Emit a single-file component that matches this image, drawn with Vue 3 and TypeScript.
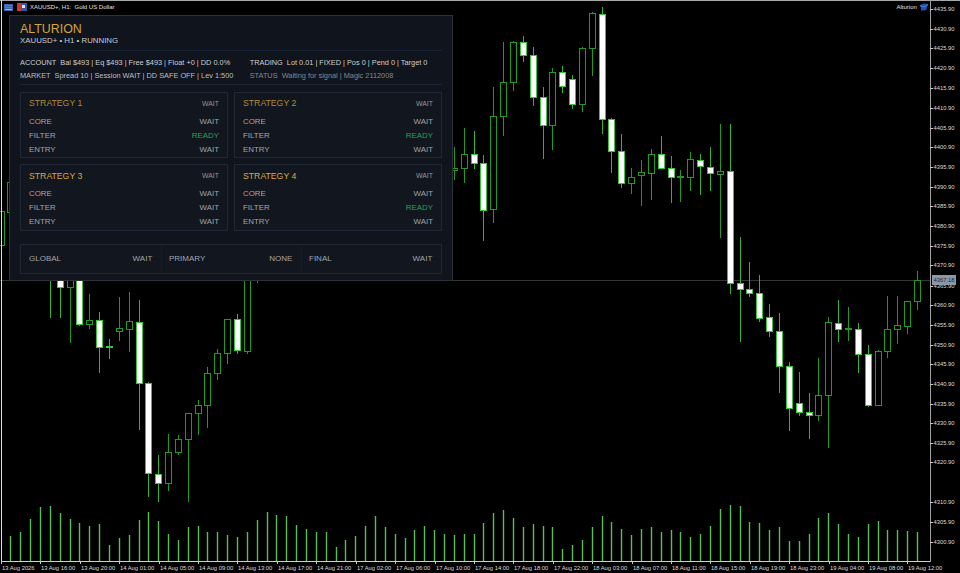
<template>
  <div class="screen">
    <svg class="chart" width="960" height="573" viewBox="0 0 960 573">
      <rect width="960" height="573" fill="#000" />
      <line x1="0" y1="280.5" x2="931" y2="280.5" stroke="#34373a" />

      <line v-for="v in volumes" :key="'v' + v.i" :x1="barX(v.i) + 0.5" :x2="barX(v.i) + 0.5" :y1="v.y" y2="561" stroke="#57bd57" stroke-width="1.4" />
      <g shape-rendering="crispEdges">
        <g v-for="c in candles" :key="'c' + c.i">
          <line :x1="barX(c.i) + 0.5" :x2="barX(c.i) + 0.5" :y1="c.wt" :y2="c.wb" :stroke="c.white ? '#2fb52f' : '#209a20'" />
          <rect :x="barX(c.i) - 2.5" :y="c.t + 0.5" width="6" :height="Math.max(c.b - c.t, 1)" :fill="c.white ? '#fff' : '#000'" :stroke="c.white ? '#35c935' : '#209a20'" />
        </g>
        <line x1="0" y1="0.5" x2="960" y2="0.5" stroke="#a8a8a8" />
        <line x1="1.5" y1="0" x2="1.5" y2="562" stroke="#e0e0e0" />
        <line x1="1" y1="561.5" x2="931" y2="561.5" stroke="#d0d0d0" />
        <line x1="930.5" y1="0" x2="930.5" y2="562" stroke="#a0a0a0" />
        <line v-for="t in timeLabels" :key="'t' + t.x" :x1="t.x + 0.5" :x2="t.x + 0.5" y1="561" y2="564" stroke="#c8c8c8" />
        <line v-for="p in priceLabels" :key="'p' + p.y" x1="930" x2="933" :y1="p.y + 0.5" :y2="p.y + 0.5" stroke="#c8c8c8" />
      </g>

      <text v-for="p in priceLabels" :key="'pl' + p.y" x="933.5" :y="p.y + 2.2" class="axis-text">{{ p.text }}</text>
      <text v-for="t in timeLabels" :key="'tl' + t.x" :x="t.x + 1" y="569.5" class="axis-text">{{ t.text }}</text>

      <rect x="932" y="275" width="24" height="10" fill="#8a98a8" />
      <text x="933.5" y="282.2" class="axis-text price-now">4367.18</text>

      <!-- toolbar icons top left -->
      <g shape-rendering="crispEdges">
        <rect x="4" y="4" width="9" height="7" fill="#3763a8" />
        <rect x="5" y="5" width="7" height="1" fill="#c95a50" />
        <rect x="5" y="7" width="7" height="1" fill="#c95a50" />
        <rect x="5" y="9" width="7" height="1" fill="#9fb8d8" />
        <rect x="17" y="3" width="10" height="8" fill="#2f58b0" />
        <rect x="17" y="3" width="4" height="8" fill="#c83a3a" />
        <rect x="22" y="5" width="3" height="3" fill="#e8e8f0" />
      </g>
      <text x="30" y="9" class="top-text">{{ symbolTitle }}</text>
      <text x="896.5" y="9.2" class="top-text">Alturion</text>
      <!-- hat icon -->
      <path d="M919.5 5.5 L924 3.6 L928.5 4.2 L927 6.5 L926.5 10 L921 10.8 L921 7.2 Z" fill="#1b55b5" />
      <path d="M920 5.6 L924 7 L928 4.6" fill="none" stroke="#6fa0e8" stroke-width="0.6" />
    </svg>

    <div class="panel">
      <div class="brand">ALTURION</div>
      <div class="sub">XAUUSD+ • H1 • RUNNING</div>
      <div class="info">
        <div v-for="l in infoLines" :key="l.text" class="line" :class="l.kind">{{ l.text }}</div>
      </div>
      <div class="cards">
        <div v-for="s in strategies" :key="s.name" class="card">
          <div class="card-head">
            <span class="card-title" :class="{ dim: s.dim }">{{ s.name }}</span>
            <span class="card-state">WAIT</span>
          </div>
          <div v-for="r in s.rows" :key="r.label" class="row">
            <span>{{ r.label }}</span>
            <span :class="{ ready: r.value === 'READY' }">{{ r.value }}</span>
          </div>
        </div>
      </div>
      <div class="summary">
        <div v-for="g in summary" :key="g.label" class="cell">
          <span>{{ g.label }}</span>
          <span>{{ g.value }}</span>
        </div>
      </div>
    </div>
  </div>
</template>

<script setup lang="ts">
type Row = [number, number, number, number, number, number]

const symbolTitle = 'XAUUSD+, H1:  Gold US Dollar'

const infoLines = [
  { text: 'ACCOUNT  Bal $493 | Eq $493 | Free $493 | Float +0 | DD 0.0%', kind: '' },
  { text: 'TRADING  Lot 0.01 | FIXED | Pos 0 | Pend 0 | Target 0', kind: '' },
  { text: 'MARKET  Spread 10 | Session WAIT | DD SAFE OFF | Lev 1:500', kind: 'market' },
  { text: 'STATUS  Waiting for signal | Magic 2112008', kind: 'status' },
]

// i, wick top, body top, body bottom, wick bottom, white
const rawCandles: Row[] = [
  [-1, 205, 211, 245, 250, 0], [0, 175, 182, 212, 215, 0],
  [4, 200, 210, 270, 318, 1], [5, 250, 260, 287, 318, 1], [6, 250, 260, 287, 343, 0], [7, 250, 260, 324, 326, 1],
  [8, 294, 320, 324, 329, 0], [9, 312, 320, 347, 373, 1], [10, 339, 346, 347, 359, 1], [11, 297, 328, 331, 341, 0],
  [12, 292, 321, 329, 352, 0], [13, 300, 322, 383, 430, 1], [14, 382, 383, 473, 497, 1], [15, 455, 474, 483, 502, 1],
  [16, 434, 452, 483, 491, 0], [17, 435, 439, 452, 455, 0], [18, 413, 413, 439, 502, 0], [19, 400, 405, 413, 435, 0],
  [20, 367, 373, 405, 428, 0], [21, 349, 353, 373, 380, 0], [22, 319, 319, 353, 364, 0], [23, 314, 319, 350, 354, 1],
  [24, 250, 260, 351, 354, 0], [25, 260, 265, 270, 283, 0],
  [45, 147, 168, 170, 180, 0], [46, 128, 154, 168, 183, 0], [47, 131, 154, 163, 169, 1], [48, 155, 163, 210, 241, 1],
  [49, 87, 116, 209, 223, 0], [50, 42, 82, 116, 136, 0], [51, 41, 42, 82, 91, 0], [52, 36, 42, 55, 62, 1],
  [53, 47, 55, 97, 106, 1], [54, 87, 97, 125, 159, 1], [55, 68, 72, 125, 150, 0], [56, 66, 72, 86, 93, 1],
  [57, 75, 79, 104, 109, 1], [58, 47, 48, 104, 112, 0], [59, 12, 13, 48, 76, 0], [60, 7, 14, 119, 134, 1],
  [61, 118, 119, 151, 173, 1], [62, 134, 151, 183, 188, 1], [63, 168, 177, 183, 194, 0], [64, 160, 172, 175, 206, 0],
  [65, 149, 154, 173, 200, 0], [66, 136, 154, 168, 169, 1], [67, 156, 168, 177, 203, 1], [68, 170, 176, 177, 202, 0],
  [69, 152, 159, 177, 191, 0], [70, 154, 160, 166, 195, 1], [71, 147, 167, 173, 191, 1], [72, 124, 171, 174, 238, 0],
  [73, 124, 171, 283, 294, 1], [74, 237, 283, 289, 342, 1], [75, 262, 289, 293, 297, 1], [76, 275, 293, 318, 322, 1],
  [77, 304, 317, 331, 337, 1], [78, 313, 331, 366, 393, 1], [79, 362, 366, 408, 431, 1], [80, 372, 403, 412, 416, 1],
  [81, 393, 412, 415, 439, 1], [82, 358, 395, 415, 421, 0], [83, 317, 322, 395, 448, 0], [84, 300, 323, 329, 342, 1],
  [85, 307, 328, 329, 341, 0], [86, 323, 329, 354, 373, 1], [87, 345, 354, 405, 407, 1], [88, 350, 351, 405, 406, 0],
  [89, 296, 329, 351, 358, 0], [90, 296, 325, 329, 344, 0], [91, 301, 301, 326, 334, 0], [92, 271, 280, 301, 310, 0],
]

const candles = rawCandles.map(([i, wt, t, b, wb, white]) => ({ i, wt, t, b, wb, white: white === 1 }))

const volumeTops = [
  122, 112, 72, 35, 33, 54, 73, 84, 93, 88, 150, 130, 121, 75, 51, 78, 117, 135, 97, 93, 112, 111, 120, 126, 112, 75, 51, 60, 63, 90, 102, 112,
  112, 155, 135, 123, 93, 63, 96, 116, 129, 105, 93, 105, 117, 120, 116, 117, 84, 54, 45, 69, 97, 87, 93, 97, 162, 150, 135, 97, 63, 82, 102, 121,
  102, 97, 111, 105, 111, 126, 118, 93, 42, 30, 33, 82, 84, 106, 97, 138, 138, 116, 68, 54, 87, 117, 126, 88, 78, 105, 105, 108, 112,
]
const volumes = volumeTops.map((v, i) => ({ i, y: Math.round(495 + v / 3) }))

function barX(i: number) {
  return Math.round(10.4 + 9.854 * i)
}

const priceRows: [number, string][] = [
  [9, '4435.90'], [29, '4430.90'], [48, '4425.90'], [68, '4420.90'], [88, '4415.90'], [108, '4410.90'],
  [128, '4405.90'], [147, '4400.90'], [167, '4395.90'], [187, '4390.90'], [206, '4385.90'], [226, '4380.90'],
  [246, '4375.90'], [265, '4370.90'], [286, '4365.90'], [305, '4360.90'], [325, '4355.90'], [345, '4350.90'],
  [364, '4345.90'], [384, '4340.90'], [404, '4335.90'], [423, '4330.90'], [443, '4325.90'], [462, '4320.90'],
  [502, '4310.90'], [522, '4305.90'], [542, '4300.90'],
]
const priceLabels = priceRows.map(([y, text]) => ({ y, text }))

const timeRows: [number, string][] = [
  [1, '13 Aug 2026'], [40, '13 Aug 16:00'], [80, '13 Aug 20:00'], [119, '14 Aug 01:00'], [159, '14 Aug 05:00'],
  [198, '14 Aug 09:00'], [237, '14 Aug 13:00'], [277, '14 Aug 17:00'], [316, '14 Aug 21:00'], [356, '17 Aug 02:00'],
  [395, '17 Aug 06:00'], [435, '17 Aug 10:00'], [474, '17 Aug 14:00'], [513, '17 Aug 18:00'], [553, '17 Aug 22:00'],
  [592, '18 Aug 03:00'], [632, '18 Aug 07:00'], [671, '18 Aug 11:00'], [710, '18 Aug 15:00'], [750, '18 Aug 19:00'],
  [789, '18 Aug 23:00'], [829, '19 Aug 04:00'], [868, '19 Aug 08:00'], [907, '19 Aug 12:00'],
]
const timeLabels = timeRows.map(([x, text]) => ({ x, text }))

const makeRows = (filter: string) => [
  { label: 'CORE', value: 'WAIT' },
  { label: 'FILTER', value: filter },
  { label: 'ENTRY', value: 'WAIT' },
]

const strategies = [
  { name: 'STRATEGY 1', dim: true, rows: makeRows('READY') },
  { name: 'STRATEGY 2', dim: true, rows: makeRows('READY') },
  { name: 'STRATEGY 3', dim: false, rows: makeRows('WAIT') },
  { name: 'STRATEGY 4', dim: false, rows: makeRows('READY') },
]

const summary = [
  { label: 'GLOBAL', value: 'WAIT' },
  { label: 'PRIMARY', value: 'NONE' },
  { label: 'FINAL', value: 'WAIT' },
]
</script>

<style>
html, body { background: #000; overflow: hidden; }
</style>

<style scoped>
.screen { position: relative; width: 960px; height: 573px; overflow: hidden; background: #000; font-family: "Liberation Sans", Arial, sans-serif; }
.chart { display: block; }
.axis-text { font-family: "Liberation Sans", Arial, sans-serif; font-size: 5.8px; fill: #dcdcdc; }
.price-now { fill: #20262c; }
.top-text { font-family: "Liberation Sans", Arial, sans-serif; font-size: 6px; fill: #e0e0e0; white-space: pre; }

.panel { position: absolute; left: 9px; top: 15px; width: 444px; height: 266px; box-sizing: border-box; padding: 7px 10px 0; background: #10141d; border: 1px solid #2e3138; }
.brand { font-size: 12.4px; line-height: 13px; color: #d6a638; }
.sub { font-size: 7.85px; line-height: 10px; padding-bottom: 4px; color: #c8cbcf; border-bottom: 1px solid #182338; }
.info { display: grid; grid-template-columns: 229.7px 1fr; grid-auto-rows: 13.4px; padding: 4.5px 0 2px; border-bottom: 1px solid #182338; }
.line { font-size: 7.35px; line-height: 13.4px; color: #cdd0d4; white-space: pre; }
.market { color: #bcbfc4; }
.status { color: #83888f; }

.cards { display: grid; grid-template-columns: 208px 208px; column-gap: 6px; row-gap: 6px; margin-top: 6.4px; }
.card { box-sizing: border-box; height: 66.5px; padding: 4.5px 8px 0; background: #12161f; border: 1px solid #202838; }
.card-head { display: flex; justify-content: space-between; align-items: center; height: 12px; margin-bottom: 5px; }
.card-title { font-size: 8.7px; color: #d4aa40; }
.card-title.dim { color: #ad8d38; }
.card-state { font-size: 6.9px; color: #94989e; }
.row { display: flex; justify-content: space-between; align-items: center; height: 14px; font-size: 7.9px; color: #a2a5ab; }
.ready { color: #2c9f58; }

.summary { display: grid; grid-template-columns: 140px 140px 1fr; height: 30px; box-sizing: border-box; margin-top: 13.6px; background: #12161f; border: 1px solid #202838; }
.cell { display: flex; justify-content: space-between; align-items: center; padding: 0 8.7px 2px 8px; font-size: 8px; color: #a2a5ab; }
.cell + .cell { padding-left: 7px; border-left: 1px solid #171c28; }
</style>
